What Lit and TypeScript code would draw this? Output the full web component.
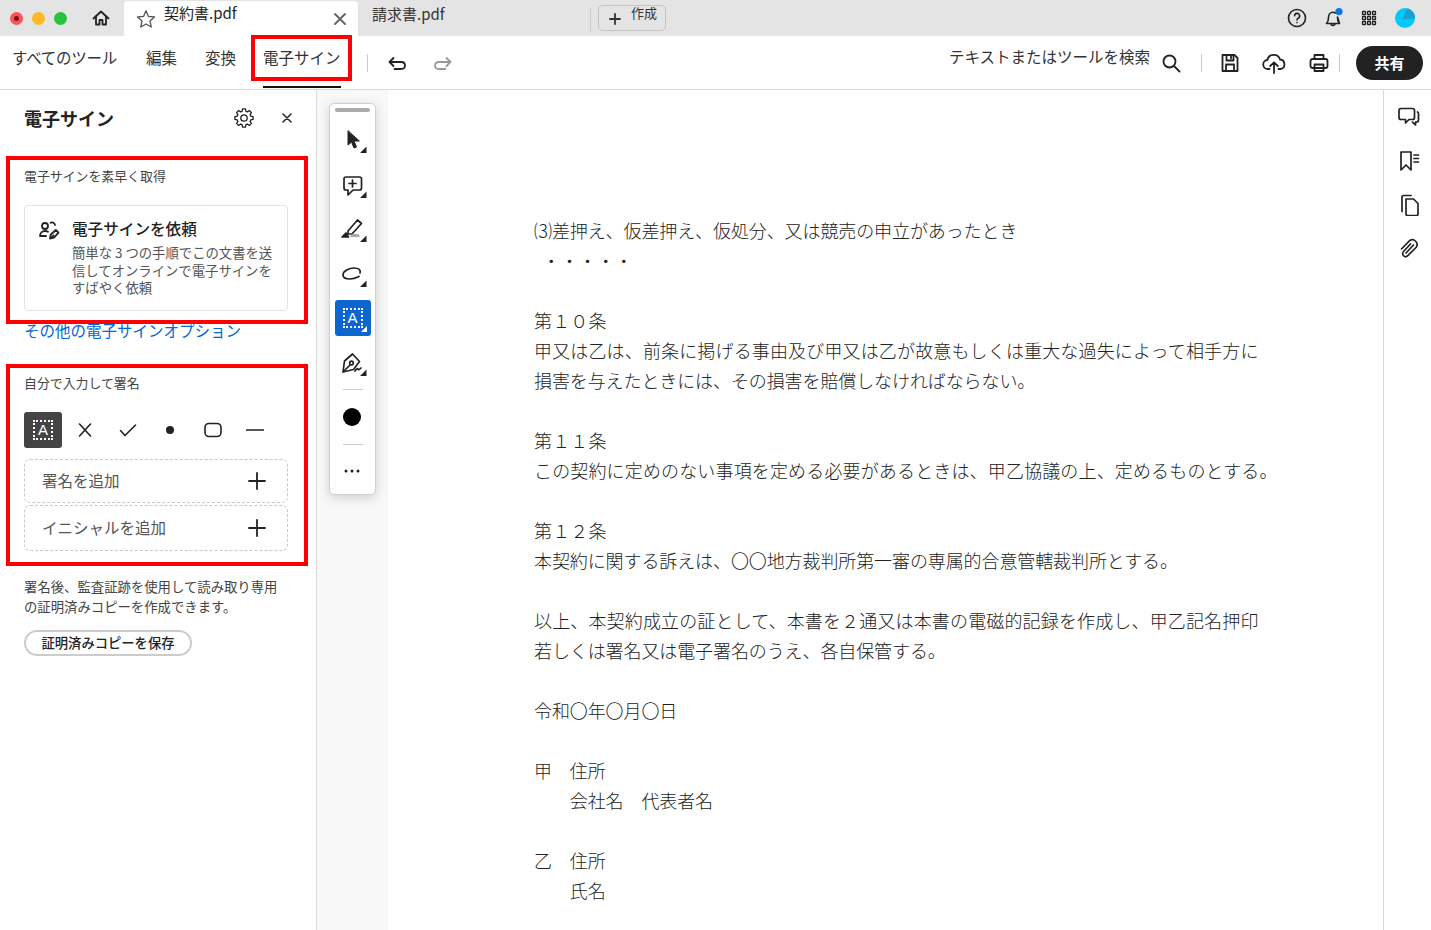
import { LitElement, css, html, svg } from "lit";
import { customElement } from "lit/decorators.js";

const docLines = [
  "⑶差押え、仮差押え、仮処分、又は競売の申立があったとき",
  "  ・・・・・",
  "",
  "第１０条",
  "甲又は乙は、前条に掲げる事由及び甲又は乙が故意もしくは重大な過失によって相手方に",
  "損害を与えたときには、その損害を賠償しなければならない。",
  "",
  "第１１条",
  "この契約に定めのない事項を定める必要があるときは、甲乙協議の上、定めるものとする。",
  "",
  "第１２条",
  "本契約に関する訴えは、〇〇地方裁判所第一審の専属的合意管轄裁判所とする。",
  "",
  "以上、本契約成立の証として、本書を２通又は本書の電磁的記録を作成し、甲乙記名押印",
  "若しくは署名又は電子署名のうえ、各自保管する。",
  "",
  "令和〇年〇月〇日",
  "",
  "甲　住所",
  "　　会社名　代表者名",
  "",
  "乙　住所",
  "　　氏名",
];

// these lines sit a little tighter in the scan
const tightLines = new Set([0, 5, 11, 14, 16, 18, 19, 21, 22]);

const icon = (size: number, body: unknown, sw = 1.6) => html`<svg
  width=${size}
  height=${size}
  viewBox="0 0 ${size} ${size}"
  fill="none"
  stroke="currentColor"
  stroke-width=${sw}
  stroke-linecap="round"
  stroke-linejoin="round"
>${body}</svg>`;

const corner = svg`<path d="M32.500 24.500V31H26z" fill="#222" stroke="none"/>`;
const plus = svg`<path d="M9 1v16M1 9h16"/>`;

function gearPath(c: number, inner: number, outer: number, teeth: number) {
  const pts: string[] = [];
  const step = (Math.PI * 2) / teeth;
  for (let i = 0; i < teeth; i++) {
    const a = i * step;
    const pt = (r: number, t: number) =>
      `${(c + r * Math.cos(t)).toFixed(2)} ${(c + r * Math.sin(t)).toFixed(2)}`;
    pts.push(pt(inner, a - step * 0.36), pt(outer, a - step * 0.2), pt(outer, a + step * 0.2), pt(inner, a + step * 0.36));
  }
  return `M${pts.join("L")}Z`;
}

@customElement("app-root")
export class AppRoot extends LitElement {
  static styles = css`
    :host {
      display: block;
      height: 100vh;
      overflow: hidden;
      background: #fff;
      color: #222;
      font-family: "Noto Sans CJK JP", "Liberation Sans", sans-serif;
    }
    svg {
      display: block;
      flex: none;
    }

    .top {
      height: 36px;
      background: #e4e4e4;
      display: flex;
      align-items: flex-end;
    }
    .lights {
      display: flex;
      gap: 9px;
      margin: 0 0 11px 10px;
    }
    .light {
      width: 13px;
      height: 13px;
      border-radius: 50%;
      display: flex;
      align-items: center;
      justify-content: center;
    }
    .light.red {
      background: #f4565a;
    }
    .light.red::after {
      content: "";
      width: 5px;
      height: 5px;
      border-radius: 50%;
      background: #7d1315;
    }
    .light.yellow {
      background: #fbb829;
    }
    .light.green {
      background: #27c23f;
    }
    .home {
      margin: 0 13px 8px 24px;
    }
    .tab {
      height: 35px;
      width: 234px;
      display: flex;
      align-items: center;
      font-size: 15px;
      line-height: 20px;
      box-sizing: border-box;
    }
    .tab.active {
      background: #fff;
      border-radius: 4px 4px 0 0;
      padding: 0 12px;
    }
    .tab .name {
      margin: -11px 0 0 8px;
      flex: 1;
    }
    .tab .star {
      color: #555;
    }
    .tab .close {
      color: #666;
    }
    .tab.other {
      width: 233px;
      padding-left: 14px;
      border-right: 1px solid #ccc;
      height: 24px;
      margin-bottom: 4px;
      color: #333;
    }
    .tab.other .name {
      margin: -13px 0 0 0;
    }
    .create {
      margin: 0 0 5px 7px;
      width: 68px;
      height: 26px;
      box-sizing: border-box;
      border: 1px solid #c4c4c4;
      border-radius: 5px;
      display: flex;
      align-items: center;
      padding-left: 10px;
      gap: 10px;
      font-size: 13px;
      color: #333;
    }
    .create svg {
      margin-top: 2px;
    }
    .create span {
      margin-top: -12px;
    }
    .top-right {
      margin: 0 16px 8px auto;
      display: flex;
      align-items: center;
      gap: 16px;
    }
    .grid {
      margin: 0 2px;
    }
    .avatar {
      width: 20px;
      height: 20px;
    }

    .bar {
      height: 53px;
      border-bottom: 1px solid #d9d9d9;
      display: flex;
    }
    .nav {
      display: flex;
      gap: 28px;
      margin-left: 12px;
      font-size: 15.5px;
      line-height: 20px;
      color: #333;
    }
    .nav-item {
      position: relative;
      padding-top: 11px;
      white-space: nowrap;
    }
    .nav-item.all {
      letter-spacing: -0.25px;
      margin-right: 1px;
    }
    .nav-item.current {
      margin-left: -1px;
    }
    .nav-item.current::before {
      content: "";
      position: absolute;
      left: -12px;
      right: -11px;
      top: -1px;
      height: 46px;
      box-sizing: border-box;
      border: 4px solid #f00;
    }
    .nav-item.current::after {
      content: "";
      position: absolute;
      left: 0;
      right: 0;
      bottom: 1px;
      height: 2px;
      background: #111;
    }
    .vline {
      width: 1px;
      height: 18px;
      background: #ccc;
      flex: none;
    }
    .bar-tools {
      display: flex;
      align-items: center;
      margin-left: 26px;
    }
    .redo {
      color: #999;
      margin-left: 26px;
    }
    .undo {
      margin-left: 19px;
    }
    .bar-right {
      margin-left: auto;
      margin-right: 8px;
      display: flex;
      align-items: center;
    }
    .search {
      font-size: 15.5px;
      line-height: 20px;
      margin: -13px 11px 0 0;
      color: #333;
      white-space: nowrap;
    }
    .share {
      width: 67px;
      height: 34px;
      border-radius: 17px;
      background: #222;
      color: #fff;
      font-size: 15px;
      font-weight: 700;
      display: flex;
      align-items: center;
      justify-content: center;
      margin-left: 16px;
    }

    .main {
      display: flex;
      height: 840px;
    }
    .side {
      width: 317px;
      flex: none;
      box-sizing: border-box;
      border-right: 1px solid #d9d9d9;
      padding-left: 6px;
    }
    .side-head {
      height: 56px;
      display: flex;
      align-items: center;
      padding: 0 0 0 18px;
      width: 286px;
      box-sizing: border-box;
    }
    .side-head h2 {
      margin: 0;
      flex: 1;
      font-size: 18px;
      font-weight: 700;
      line-height: 24px;
    }
    .side-head .x {
      margin-left: 28px;
    }
    .callout {
      width: 302px;
      box-sizing: border-box;
      border: 4px solid #f00;
      padding-left: 14px;
      margin-top: 10px;
    }
    .callout.one {
      height: 168px;
      padding-top: 7px;
    }
    .callout.two {
      height: 202px;
      margin-top: 26px;
      padding-top: 6px;
    }
    .label {
      font-size: 12.9px;
      line-height: 18px;
      color: #444;
    }
    .card {
      margin-top: 20px;
      width: 264px;
      height: 106px;
      box-sizing: border-box;
      border: 1px solid #e4e4e4;
      border-radius: 4px;
      display: flex;
      gap: 11px;
      padding: 13px 0 0 12px;
    }
    .card h3 {
      margin: 0;
      font-size: 15.6px;
      font-weight: 500;
      line-height: 18px;
    }
    .card p {
      margin: 7px 0 0;
      font-size: 13.35px;
      line-height: 17.6px;
      color: #555;
      white-space: nowrap;
    }
    .link {
      margin: -2px 0 0 18px;
      font-size: 15.5px;
      line-height: 16px;
      color: #0265dc;
    }
    .marks {
      display: flex;
      margin-top: 20px;
      height: 36px;
      align-items: center;
    }
    .mark {
      width: 42.5px;
      display: flex;
      justify-content: center;
      color: #222;
    }
    .mark.first {
      margin-left: 2px;
    }
    .a-on {
      width: 38px;
      height: 36px;
      border-radius: 3px;
      background: #444;
      display: flex;
      align-items: center;
      justify-content: center;
    }
    .a-box {
      width: 20px;
      height: 20px;
      box-sizing: border-box;
      border: 2px dotted #fff;
      color: #fff;
      font-size: 15px;
      font-family: "Liberation Sans", sans-serif;
      line-height: 16px;
      text-align: center;
    }
    .slot {
      margin-top: 11px;
      width: 264px;
      height: 44px;
      box-sizing: border-box;
      border: 1px dashed #c8c8c8;
      border-radius: 6px;
      display: flex;
      align-items: center;
      justify-content: space-between;
      padding: 0 21px 2px 17px;
      font-size: 15.5px;
      color: #555;
    }
    .slot svg {
      color: #222;
      margin-top: 2px;
    }
    .slot + .slot {
      margin-top: 2px;
      height: 46px;
    }
    .after {
      margin: 10px 0 0 18px;
      font-size: 13.37px;
      line-height: 20px;
      color: #444;
      white-space: nowrap;
    }
    .save-copy {
      margin: 14px 0 0 18px;
      width: 168px;
      height: 26px;
      box-sizing: border-box;
      border: 2px solid #ccc;
      border-radius: 13px;
      font-size: 13.3px;
      font-weight: 500;
      display: flex;
      align-items: center;
      justify-content: center;
      padding-bottom: 2px;
    }

    .gutter {
      width: 71px;
      flex: none;
      background: #f8f8f8;
      padding: 13px 0 0 13px;
      box-sizing: border-box;
    }
    .float {
      width: 47px;
      height: 392px;
      margin-left: -1px;
      box-sizing: border-box;
      background: #fff;
      border: 1px solid #cfcfcf;
      border-radius: 5px;
      box-shadow: 0 3px 12px rgba(0, 0, 0, 0.16);
      display: flex;
      flex-direction: column;
      align-items: center;
      padding-top: 4px;
      color: #222;
    }
    .grip {
      width: 35px;
      height: 4px;
      border-radius: 2px;
      background: #ababab;
      margin-bottom: 10px;
    }
    .tool {
      width: 36px;
      height: 36px;
      margin-bottom: 8.6px;
      position: relative;
    }
    .tool > svg {
      margin-left: -1px;
    }
    .tool.on {
      background: #0d66d0;
      border-radius: 3px;
      display: flex;
      align-items: center;
      justify-content: center;
    }
    .tool.on::after {
      content: "";
      position: absolute;
      right: 4px;
      bottom: 4px;
      border-style: solid;
      border-width: 0 0 6px 6px;
      border-color: transparent transparent #fff transparent;
    }
    .sep {
      width: 20px;
      height: 1px;
      background: #ccc;
      flex: none;
    }
    .sep.first {
      margin-top: -1px;
    }
    .dot {
      width: 18px;
      height: 18px;
      border-radius: 50%;
      background: #000;
      margin: 18px 1px 18px 0;
      flex: none;
    }
    .more {
      margin: 24px 1px 0 0;
    }

    .doc {
      flex: 1;
      padding: 125px 0 0 146px;
      font-size: 18px;
      letter-spacing: 0.15px;
      line-height: 30px;
      font-weight: 300;
      color: #222;
    }
    .ln {
      height: 30px;
      white-space: pre;
    }
    .ln.tight {
      letter-spacing: -0.1px;
    }

    .rail {
      width: 48px;
      flex: none;
      box-sizing: border-box;
      border-left: 1px solid #d9d9d9;
      display: flex;
      flex-direction: column;
      gap: 22px;
      padding: 16px 0 0 14px;
      color: #222;
    }
    .gap-save {
      width: 22px;
    }
    .gap-print {
      width: 23px;
    }
    .vline.v-search {
      margin: 0 18px 0 20px;
    }
    .vline.v-print {
      margin-left: 10px;
    }
  `;

  render() {
    return html`
      <div class="top">
        <div class="lights">
          <span class="light red"></span><span class="light yellow"></span><span class="light green"></span>
        </div>
        <div class="home">
          ${icon(20, svg`<path d="M2.500 10.500 10 3.500l7.500 7"/><path d="M5 8.500V16.500h3.500v-4.500h3v4.500H15V8.500"/>`, 1.800)}
        </div>
        <div class="tab active">
          <span class="star">${icon(20, svg`<path d="m10 1.800 2.500 5.600 6 .6-4.500 4 1.300 6L10 15l-5.300 3 1.300-6-4.500-4 6-.6z"/>`, 1.300)}</span>
          <span class="name">契約書.pdf</span>
          <span class="close">${icon(12, svg`<path d="m1 1 10 10M11 1 1 11"/>`, 2)}</span>
        </div>
        <div class="tab other"><span class="name">請求書.pdf</span></div>
        <div class="create">
          ${icon(12, svg`<path d="M6 1v10M1 6h10"/>`, 1.800)}
          <span>作成</span>
        </div>
        <div class="top-right">
          ${icon(20, svg`<circle cx="10" cy="10" r="8.500"/><path d="M7.600 7.800a2.500 2.500 0 1 1 3.600 2.300c-.8.4-1.200.9-1.200 1.800"/><path d="M10 14.500v.1"/>`)}
          ${icon(20, svg`<path d="M3.500 15.500c1.700-1.500 2-3 2-6 0-3 1.800-5.200 4.500-5.200 1 0 1.700.2 2.400.7M14.500 9c0 3.500.4 5 2 6.500zM3.500 15.500h13M8 15.500a2 2 0 0 0 4 0"/><circle cx="16" cy="3.600" r="3.600" fill="#1473e6" stroke="none"/>`)}
          <svg class="grid" width="16" height="16" viewBox="0 0 16 16" fill="none" stroke="#222" stroke-width="1.300">
            ${[1.5, 6.5, 11.5].flatMap((y) =>
              [1.5, 6.5, 11.5].map((x) => svg`<rect x=${x} y=${y} width="3" height="3" rx=".6"/>`),
            )}
          </svg>
          <svg class="avatar" viewBox="0 0 20 20">
            <circle cx="10" cy="10" r="10" fill="#00c9f5" />
            <path d="M12.500.3A10 10 0 0 1 20 10.500L7 11z" fill="#1a9fcf" />
          </svg>
        </div>
      </div>

      <div class="bar">
        <div class="nav">
          <div class="nav-item all">すべてのツール</div>
          <div class="nav-item">編集</div>
          <div class="nav-item">変換</div>
          <div class="nav-item current">電子サイン</div>
        </div>
        <div class="bar-tools">
          <span class="vline"></span>
          <span class="undo">${icon(20, svg`<path d="M6.500 5 2.500 9l4 4"/><path d="M3 9h11c2.500 0 4 1.500 4 3.500S16.500 16 14 16H7.500"/>`, 1.800)}</span>
          <span class="redo">${icon(20, svg`<path d="m13.500 5 4 4-4 4"/><path d="M17 9H6c-2.500 0-4 1.500-4 3.500S3.500 16 6 16h6.500"/>`, 1.800)}</span>
        </div>
        <div class="bar-right">
          <span class="search">テキストまたはツールを検索</span>
          ${icon(20, svg`<circle cx="8.500" cy="8.500" r="6"/><path d="m13 13 5.500 5.500"/>`, 1.800)}
          <span class="vline v-search"></span>
          ${icon(20, svg`<path d="M2.500 2h12l3 3v13h-15z"/><path d="M6.500 2v5.500h7V2M6 18v-6.500h8V18"/><path d="M11 3.500v2"/>`, 1.800)}
          <span class="gap-save"></span>
          ${icon(24, svg`<path d="M7.500 18H6a4.500 4.500 0 0 1-.6-9A6.500 6.500 0 0 1 18 8.500a4.800 4.800 0 0 1 .5 9.500h-2"/><path d="M12 22V11.500M8.200 15 12 11.300l3.800 3.700"/>`, 1.800)}
          <span class="gap-print"></span>
          ${icon(20, svg`<path d="M5.500 6V2h9v4"/><rect x="1.500" y="6" width="17" height="9" rx="2"/><path d="M5.500 11.500h9V18h-9z"/>`, 1.800)}
          <span class="vline v-print"></span>
          <div class="share">共有</div>
        </div>
      </div>

      <div class="main">
        <aside class="side">
          <div class="side-head">
            <h2>電子サイン</h2>
            ${icon(20, svg`<path d=${gearPath(10, 7, 9.2, 8)}/><circle cx="10" cy="10" r="3.200"/>`, 1.300)}
            <span class="x">${icon(10, svg`<path d="m1 1 8 8M9 1 1 9"/>`, 1.500)}</span>
          </div>

          <section class="callout one">
            <div class="label">電子サインを素早く取得</div>
            <div class="card">
              ${icon(24, svg`<circle cx="8" cy="7" r="3"/><path d="M13.500 3.800a3 3 0 0 1 4.500 2.200M3 17c0-3 2.200-5 5-5 1 0 2 .2 3 .8M3 17h6"/><path d="m13 19.500.8-4 5-4.500 2.700 2.700-4.500 5z"/><path d="M15 18l1.500-1.500"/>`, 1.800)}
              <div>
                <h3>電子サインを依頼</h3>
                <p>簡単な 3 つの手順でこの文書を送<br />信してオンラインで電子サインを<br />すばやく依頼</p>
              </div>
            </div>
          </section>
          <div class="link">その他の電子サインオプション</div>

          <section class="callout two">
            <div class="label">自分で入力して署名</div>
            <div class="marks">
              <div class="a-on"><div class="a-box">A</div></div>
              <div class="mark first">${icon(14, svg`<path d="m1.500 1 11 12M12.500 1l-11 12"/>`, 1.600)}</div>
              <div class="mark">${icon(18, svg`<path d="m1.500 9.500 4.500 5L16.500 4"/>`, 1.600)}</div>
              <div class="mark"><svg width="8" height="8"><circle cx="4" cy="4" r="4" fill="#222" /></svg></div>
              <div class="mark">${icon(18, svg`<rect x="1" y="2.500" width="16" height="13" rx="4"/>`, 1.600)}</div>
              <div class="mark">${icon(18, svg`<path d="M.500 9h17"/>`, 1.600)}</div>
            </div>
            <div class="slot">署名を追加 ${icon(18, plus, 1.800)}</div>
            <div class="slot">イニシャルを追加 ${icon(18, plus, 1.800)}</div>
          </section>

          <div class="after">署名後、監査証跡を使用して読み取り専用<br />の証明済みコピーを作成できます。</div>
          <div class="save-copy">証明済みコピーを保存</div>
        </aside>

        <div class="gutter">
          <div class="float">
            <div class="grip"></div>
            <div class="tool">
              ${icon(36, svg`<path d="M14 9v14l3.500-3 2.500 6 2.500-1-2.500-6H25z" fill="#222"/>${corner}`, 1)}
            </div>
            <div class="tool">
              ${icon(36, svg`<path d="M12 10h13.500a2 2 0 0 1 2 2v9a2 2 0 0 1-2 2H19l-5 5v-5h-2a2 2 0 0 1-2-2v-9a2 2 0 0 1 2-2z"/><path d="M18.500 13v7M15 16.500h7"/>${corner}`, 1.700)}
            </div>
            <div class="tool">
              ${icon(36, svg`<path d="m14 20 9.500-11 4 3.500L18 23l-4 0z"/><path d="M8 26l4-4 2.500 4z" fill="#222"/><path d="M16 26h10l-1.500-3H18z" fill="#aaa" stroke="none"/>${corner}`, 1.700)}
            </div>
            <div class="tool">
              ${icon(36, svg`<path d="M26 17c1-3-1-5-6-5-5 0-11 3-11 7 0 3 3 4 7 4 3 0 6-1 9-2.500"/>${corner}`, 1.700)}
            </div>
            <div class="tool on"><div class="a-box">A</div></div>
            <div class="tool">
              ${icon(36, svg`<path d="m9 27 1.500-11 8-7 7 7.500-6 8z"/><path d="m9.500 26.500 6.500-6.500"/><circle cx="17.500" cy="18" r="1.800"/><path d="M21 26c1.500-2 2.500-3 3-2s1 1 3-1"/>${corner}`, 1.700)}
            </div>
            <div class="sep first"></div>
            <div class="dot"></div>
            <div class="sep"></div>
            <div class="more">
              <svg width="18" height="4"><circle cx="3" cy="2" r="1.500" fill="#222" /><circle cx="9" cy="2" r="1.500" fill="#222" /><circle cx="15" cy="2" r="1.500" fill="#222" /></svg>
            </div>
          </div>
        </div>

        <main class="doc">
          ${docLines.map((l, i) => html`<div class="ln ${tightLines.has(i) ? "tight" : ""}">${l}</div>`)}
        </main>

        <nav class="rail">
          ${icon(22, svg`<path d="M3 2.500h11.500a2 2 0 0 1 2 2v7a2 2 0 0 1-2 2H11l-3.500 3.500v-3.500H3a2 2 0 0 1-2-2v-7a2 2 0 0 1 2-2z"/><path d="M19.500 6c.6.300 1 .8 1 1.500V14a2 2 0 0 1-2 2h-1v3l-3-2.800"/>`, 1.700)}
          ${icon(22, svg`<path d="M3 2h10v18l-5-5-5 5z"/><path d="M16 5h4.500M16 8.500h4.500M16 12h4.500"/>`, 1.700)}
          ${icon(22, svg`<path d="M8 5h7.500l4.500 4.500V20a1.500 1.500 0 0 1-1.500 1.500H9.500A1.500 1.500 0 0 1 8 20z"/><path d="M4 17.500V3a1.500 1.500 0 0 1 1.500-1.500H13"/>`, 1.700)}
          ${icon(22, svg`<path d="M12.500 6 5.500 13.500a3 3 0 0 0 4.300 4.200L18 9.500a4.700 4.700 0 0 0-6.600-6.600L3.500 11"/><path d="M15.500 7 8 15"/>`, 1.700)}
        </nav>
      </div>
    `;
  }
}
